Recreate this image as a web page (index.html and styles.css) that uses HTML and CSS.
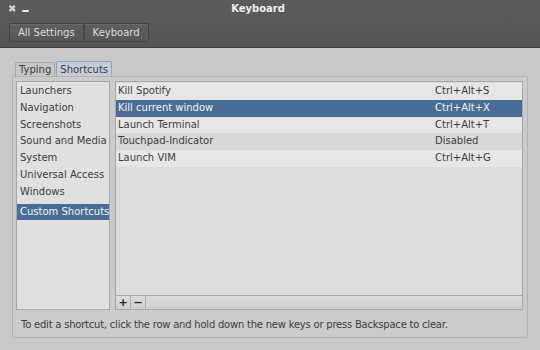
FILE: index.html
```html
<!DOCTYPE html>
<html>
<head>
<meta charset="utf-8">
<link rel="stylesheet" href="styles.css">
</head>
<body>
<div class="window">
  <div class="titlebar">
    <div class="titlerow">
      <div class="controls">
        <span class="ctl-close">&#x2716;</span>
        <span class="ctl-min"></span>
      </div>
      <div class="title">Keyboard</div>
      <div class="spacer"></div>
    </div>
    <div class="crumbs">
      <span class="crumb">All Settings</span><span class="crumb">Keyboard</span>
    </div>
  </div>
  <div class="content">
    <div class="tabs">
      <span class="tab">Typing</span><span class="tab active">Shortcuts</span>
    </div>
    <div class="page">
      <div class="lists">
        <ul class="cats">
          <li>Launchers</li>
          <li>Navigation</li>
          <li>Screenshots</li>
          <li>Sound and Media</li>
          <li>System</li>
          <li>Universal Access</li>
          <li>Windows</li>
          <li class="sep"></li>
          <li class="sel">Custom Shortcuts</li>
        </ul>
        <div class="right">
          <div class="rows">
            <div class="row odd"><span class="name">Kill Spotify</span><span class="key">Ctrl+Alt+S</span></div>
            <div class="row sel"><span class="name">Kill current window</span><span class="key">Ctrl+Alt+X</span></div>
            <div class="row odd"><span class="name">Launch Terminal</span><span class="key">Ctrl+Alt+T</span></div>
            <div class="row even"><span class="name">Touchpad-Indicator</span><span class="key">Disabled</span></div>
            <div class="row odd"><span class="name">Launch VIM</span><span class="key">Ctrl+Alt+G</span></div>
          </div>
          <div class="edit">
            <span class="ebtn">+</span><span class="ebtn">&#x2212;</span><span class="efill"></span>
          </div>
        </div>
      </div>
      <div class="hint">To edit a shortcut, click the row and hold down the new keys or press Backspace to clear.</div>
    </div>
  </div>
</div>
</body>
</html>
```
FILE: styles.css
```css
* { box-sizing: border-box; }
html, body { margin: 0; padding: 0; }
body {
  width: 540px;
  height: 350px;
  overflow: hidden;
  font-family: "DejaVu Sans", "Noto Sans", sans-serif;
  font-size: 10px;
  color: #3c3c3c;
  background: #c8c8c8;
}
.window {
  width: 540px;
  height: 350px;
  display: flex;
  flex-direction: column;
  background: #c8c8c8;
}
.titlebar {
  height: 48px;
  background: linear-gradient(#5c5c5c, #555555);
  border-bottom: 1px solid #3f3f3f;
  display: flex;
  flex-direction: column;
}
.titlerow {
  height: 17px;
  padding-right: 24px;
  display: grid;
  grid-template-columns: 1fr auto 1fr;
  align-items: center;
}
.controls {
  display: flex;
  align-items: center;
  gap: 6px;
  padding-left: 8px;
}
.ctl-close {
  color: #d4d4d4;
  font-size: 10px;
  line-height: 10px;
}
.ctl-min {
  width: 7px;
  height: 2px;
  margin-top: 4px;
  background: #e8e8e8;
  border-radius: 1px;
}
.title {
  color: #eeeeee;
  font-weight: bold;
  font-size: 10px;
}
.spacer { width: 24px; }
.crumbs {
  display: flex;
  margin-left: 9px;
  margin-top: 6px;
  height: 19px;
}
.crumb {
  display: flex;
  align-items: center;
  padding: 0 8px;
  color: #dcdcdc;
  font-size: 10px;
  border: 1px solid #444;
  background: linear-gradient(#5e5e5e, #575757);
  box-shadow: inset 0 1px 0 rgba(255,255,255,0.08);
}
.crumb:first-child { border-radius: 2px 0 0 2px; }
.crumb + .crumb { border-left: 1px solid #4a4a4a; border-radius: 0 2px 2px 0; }
.content {
  padding: 12px 12px 0 12px;
  display: flex;
  flex-direction: column;
}
.tabs {
  display: flex;
  margin-left: 3px;
  align-items: flex-end;
  height: 16px;
}
.tab {
  height: 14px;
  padding: 0 3px;
  border: 1px solid #a8a8a8;
  border-bottom: none;
  border-radius: 2px 2px 0 0;
  background: #c6c6c6;
  line-height: 14px;
  font-size: 10px;
}
.tab.active {
  height: 15px;
  line-height: 15px;
  margin-left: 1px;
  background: #c4cedb;
  border-color: #8fa3ba;
}
.page {
  width: 516px;
  height: 262px;
  border: 1px solid #b2b2b2;
  border-radius: 2px;
  background: #cbcbcb;
  padding: 4px 3px 0 3px;
  display: flex;
  flex-direction: column;
}
.lists {
  display: flex;
  gap: 5px;
  height: 229px;
}
.cats {
  list-style: none;
  margin: 0;
  padding: 1px 0 0 0;
  width: 94px;
  background: #e0e0e0;
  border: 1px solid #a6a6a6;
}
.cats li {
  height: 16.8px;
  line-height: 16.8px;
  padding-left: 3px;
  white-space: nowrap;
}
.cats li.sep { height: 3px; }
.cats li.sel {
  background: #4a6d98;
  color: #f2f4f7;
}
.right {
  width: 408px;
  display: flex;
  flex-direction: column;
  border: 1px solid #a6a6a6;
  background: #dcdcdc;
}
.rows { flex: 1; padding-top: 1px; }
.row {
  height: 16.8px;
  line-height: 16.8px;
  display: flex;
}
.row.odd { background: #e6e6e6; }
.row.even { background: #d8d8d8; }
.row.sel { background: #4a6d98; color: #f2f4f7; }
.name { width: 316px; padding-left: 2px; }
.key { padding-left: 3px; }
.edit {
  height: 14px;
  display: flex;
  border-top: 1px solid #a8a8a8;
  background: linear-gradient(#dcdcdc, #cfcfcf);
}
.ebtn {
  width: 15px;
  display: flex;
  align-items: center;
  justify-content: center;
  font-weight: bold;
  font-size: 11px;
  color: #222;
  border-right: 1px solid #b0b0b0;
}
.efill { flex: 1; }
.hint {
  padding: 9px 0 0 5px;
  font-size: 10px;
  letter-spacing: -0.22px;
  white-space: nowrap;
}
```
